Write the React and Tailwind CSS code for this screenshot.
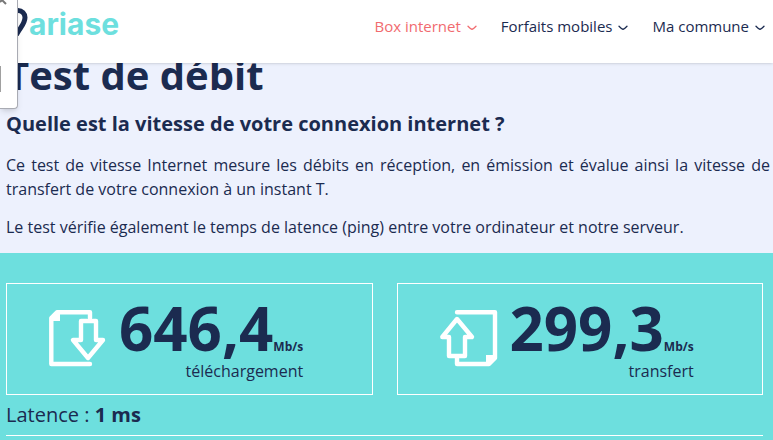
import clsx from "clsx";

const navItems = [
  { label: "Box internet", active: true },
  { label: "Forfaits mobiles" },
  { label: "Ma commune" },
];

function Chevron() {
  return (
    <svg width="10" height="6" viewBox="0 0 10 6" fill="none" stroke="currentColor" strokeWidth="1.3" strokeLinecap="round" strokeLinejoin="round" className="mt-1">
      <path d="M1 1.2C2.5 2.8 3.7 3.8 5 4.3C6.3 3.8 7.5 2.8 9 1.2" />
    </svg>
  );
}

function DownloadIcon() {
  return (
    <svg width="58" height="58" viewBox="0 0 58 58" fill="none" stroke="#fff" strokeWidth="4.4" strokeLinecap="round" strokeLinejoin="round">
      <path d="M41 8V2.300H8L2.300 8V54H41" />
      <path d="M2 8L8 2H11V11H2Z" fill="#fff" stroke="none" />
      <path d="M32 11H47V30H54L39 48L24 30H32Z" />
    </svg>
  );
}

function UploadIcon() {
  return (
    <svg width="58" height="58" viewBox="0 0 58 58" fill="none" stroke="#fff" strokeWidth="4.4" strokeLinecap="round" strokeLinejoin="round">
      <path d="M17 2.300H55V48L49 54H17V47" />
      <path d="M46 45H56V48L49 55H46Z" fill="#fff" stroke="none" />
      <path d="M9 46V27H2.300L17 9L32 27H25V46Z" />
    </svg>
  );
}

function ResultCard({ icon, value, label }) {
  return (
    <div className="flex gap-3.5 border border-white pl-[42px] pt-3.5 pb-2.5">
      <div className="w-[56px] shrink-0 pt-3">{icon}</div>
      <div className="text-right">
        <div className="text-[60px] font-bold leading-[60px]">
          {value}
          <span className="text-[12px] leading-none">Mb/s</span>
        </div>
        <div className="text-base leading-[26px]">{label}</div>
      </div>
    </div>
  );
}

function App() {
  return (
    <div className="relative overflow-x-hidden bg-[#6ddfde] font-['Open_Sans',sans-serif] text-[#1b2b50]">
      <header className="relative z-10 flex h-[63px] items-start justify-between bg-white pl-2 pr-2 shadow-sm">
        <a href="#" className="flex items-start gap-px pt-2">
          <svg width="20" height="28" viewBox="0 0 20 28" fill="none" stroke="#1b2b50" strokeWidth="5">
            <path d="M10 24C13 19 17 15 17 9.500A7 7 0 0 0 3 9.500C3 15 7 19 10 24Z" />
          </svg>
          <span className="font-['Inter',sans-serif] text-[30px] font-bold leading-[32px] text-[#6ddfde]">ariase</span>
        </a>
        <nav className="flex gap-6 pt-3.5">
          {navItems.map(({ label, active }) => (
            <button key={label} type="button" className={clsx("flex items-center gap-1.5 text-[15px] leading-6", active && "text-[#f16b6f]")}>
              {label}
              <Chevron />
            </button>
          ))}
        </nav>
      </header>

      <main>
        <section className="-mt-3 bg-[#edf1fd] pl-1.5 pr-[3px] pb-3.5">
          <h1 className="text-[40px] font-bold leading-[48px]">Test de débit</h1>
          <h2 className="mt-3 text-xl font-bold leading-[26px]">Quelle est la vitesse de votre connexion internet ?</h2>
          <p className="mt-4 text-justify text-base leading-6">
            Ce test de vitesse Internet mesure les débits en réception, en émission et évalue ainsi la vitesse de transfert de votre connexion à un instant T.
          </p>
          <p className="mt-3.5 text-base leading-6">
            Le test vérifie également le temps de latence (ping) entre votre ordinateur et notre serveur.
          </p>
        </section>

        <section className="pl-1.5 pr-2.5 pt-[30px] pb-1">
          <div className="grid grid-cols-2 gap-6">
            <ResultCard icon={<DownloadIcon />} value="646,4" label="téléchargement" />
            <ResultCard icon={<UploadIcon />} value="299,3" label="transfert" />
          </div>
          <p className="border-b border-white text-xl leading-10">
            Latence : <strong>1 ms</strong>
          </p>
        </section>
      </main>

      {/* edge of the floating window, mostly off screen */}
      <div className="absolute left-0 top-0 z-20 h-[109px] w-[18px] overflow-hidden rounded-br-sm border-b border-r border-[#a9abb3] bg-white shadow-md">
        <svg width="8" height="6" viewBox="0 0 8 6" fill="none" stroke="#777" strokeWidth="2">
          <path d="M0 2L2 0M1 -1L6 4" />
        </svg>
        <div className="mt-[60px] h-[26px] w-px bg-[#a0a0a0]" />
      </div>
    </div>
  );
}

export default App;
